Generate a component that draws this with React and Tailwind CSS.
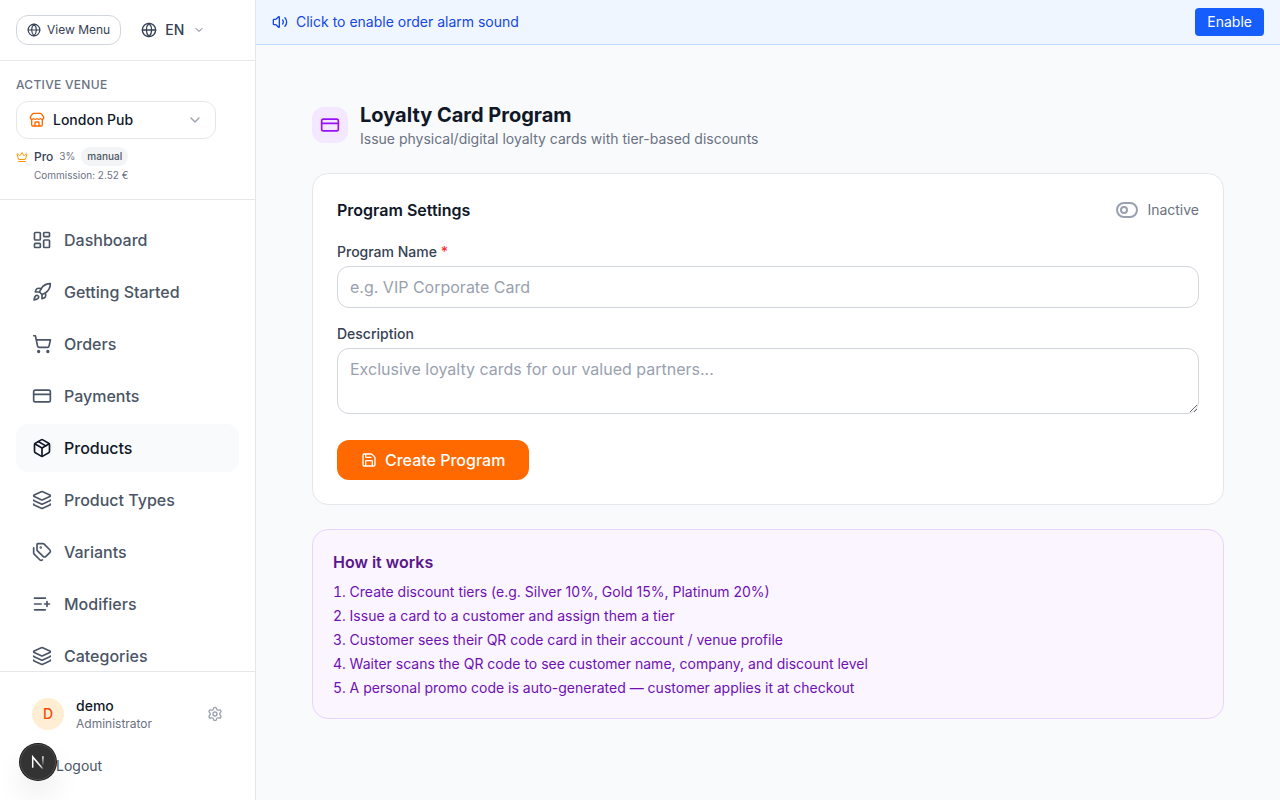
import { useState } from 'react';
import {
  ChevronDown,
  CreditCard,
  Crown,
  Globe,
  Layers,
  LayoutDashboard,
  ListPlus,
  LogOut,
  Package,
  Rocket,
  Save,
  Settings,
  ShoppingCart,
  Store,
  Tags,
  ToggleLeft,
  ToggleRight,
  Volume2,
} from 'lucide-react';

const navItems = [
  { label: 'Dashboard', icon: LayoutDashboard },
  { label: 'Getting Started', icon: Rocket },
  { label: 'Orders', icon: ShoppingCart },
  { label: 'Payments', icon: CreditCard },
  { label: 'Products', icon: Package, active: true },
  { label: 'Product Types', icon: Layers },
  { label: 'Variants', icon: Tags },
  { label: 'Modifiers', icon: ListPlus },
  { label: 'Categories', icon: Layers },
];

const steps = [
  'Create discount tiers (e.g. Silver 10%, Gold 15%, Platinum 20%)',
  'Issue a card to a customer and assign them a tier',
  'Customer sees their QR code card in their account / venue profile',
  'Waiter scans the QR code to see customer name, company, and discount level',
  'A personal promo code is auto-generated — customer applies it at checkout',
];

function Sidebar() {
  return (
    <aside className="sticky top-0 flex h-screen w-64 shrink-0 flex-col border-r border-gray-200 bg-white">
      <div className="flex h-[61px] shrink-0 items-center gap-2 border-b border-gray-200 px-4">
        <a
          href="#menu"
          className="flex items-center gap-1.5 rounded-xl border border-gray-300 px-2.5 py-1.5 text-xs text-gray-700"
        >
          <Globe className="size-3.5" />
          View Menu
        </a>
        <label className="flex items-center gap-2 px-3 py-2 text-sm font-medium text-gray-700">
          <Globe className="size-4" />
          <select aria-label="Language" className="appearance-none bg-transparent">
            <option>EN</option>
          </select>
          <ChevronDown className="size-3 text-gray-500" />
        </label>
      </div>

      <div className="shrink-0 border-b border-gray-200 p-4">
        <label
          htmlFor="venue"
          className="mb-2 block text-xs font-medium tracking-wide text-gray-500 uppercase"
        >
          Active venue
        </label>
        <div className="flex w-50 items-center gap-2 rounded-xl border border-gray-200 px-3 py-2 text-sm">
          <Store className="size-4 text-[#ff6900]" />
          <select
            id="venue"
            className="min-w-0 flex-1 appearance-none bg-transparent font-medium text-gray-900"
          >
            <option>London Pub</option>
          </select>
          <ChevronDown className="size-4 text-gray-400" />
        </div>
        <div className="mt-2 flex items-center gap-1.5">
          <Crown className="size-3 text-amber-500" />
          <span className="text-xs font-medium text-gray-700">Pro</span>
          <span className="text-[10px] leading-[15px] text-gray-500">3%</span>
          <span className="rounded-full bg-gray-100 px-1.5 py-0.5 text-[10px] leading-[15px] font-medium text-gray-600">
            manual
          </span>
        </div>
        <p className="mt-0.5 pl-[18px] text-[10px] leading-[15px] text-gray-500">
          Commission: 2.52 €
        </p>
      </div>

      <nav className="min-h-0 flex-1 overflow-y-auto p-4 [scrollbar-width:none]">
        <ul className="flex flex-col gap-1">
          {navItems.map(({ label, icon: Icon, active }) => (
            <li key={label}>
              <a
                href="#nav"
                aria-current={active ? 'page' : undefined}
                className={
                  active
                    ? 'flex items-center gap-3 rounded-xl bg-gray-50 px-4 py-3 font-medium text-gray-900'
                    : 'flex items-center gap-3 rounded-xl px-4 py-3 font-medium text-gray-600'
                }
              >
                <Icon className="size-5" />
                {label}
              </a>
            </li>
          ))}
        </ul>
      </nav>

      <div className="flex shrink-0 flex-col gap-2 border-t border-gray-200 p-4">
        <div className="flex items-center gap-3 px-4 py-2">
          <div className="flex size-8 items-center justify-center rounded-full bg-orange-100 text-sm font-medium text-orange-600">
            D
          </div>
          <div className="min-w-0 flex-1">
            <p className="text-sm font-medium text-gray-900">demo</p>
            <p className="text-xs text-gray-500">Administrator</p>
          </div>
          <button type="button" aria-label="Account settings" className="text-gray-400">
            <Settings className="size-4" />
          </button>
        </div>
        <button type="button" className="flex items-center gap-2 px-4 py-2 text-sm text-gray-600">
          <LogOut className="size-4" />
          Logout
        </button>
      </div>
    </aside>
  );
}

function DevBadge() {
  return (
    <button
      type="button"
      aria-label="Open developer tools"
      className="fixed bottom-5 left-5 flex size-9 items-center justify-center rounded-full bg-[#333333] shadow-[0_0_0_1px_#171717,inset_0_0_0_1px_#4a4a4a,0_16px_32px_-8px_rgba(0,0,0,0.24)]"
    >
      <svg width="36" height="36" viewBox="0 0 36 36" fill="none" aria-hidden="true">
        <defs>
          <linearGradient id="diagonal" x1="18" y1="18" x2="24" y2="25" gradientUnits="userSpaceOnUse">
            <stop stopColor="white" />
            <stop offset="0.6" stopColor="white" stopOpacity="0.8" />
            <stop offset="1" stopColor="white" stopOpacity="0" />
          </linearGradient>
          <linearGradient id="stem" x1="23" y1="12" x2="23" y2="22" gradientUnits="userSpaceOnUse">
            <stop stopColor="white" />
            <stop offset="1" stopColor="white" stopOpacity="0" />
          </linearGradient>
        </defs>
        <path d="M12.7 23.8V12.9L23 25" stroke="url(#diagonal)" strokeWidth="1.5" />
        <path d="M22.9 12.2V21.5" stroke="url(#stem)" strokeWidth="1.5" />
      </svg>
    </button>
  );
}

function ProgramSettings() {
  const [active, setActive] = useState(false);
  const Toggle = active ? ToggleRight : ToggleLeft;
  return (
    <form
      onSubmit={(event) => event.preventDefault()}
      className="flex flex-col gap-5 rounded-2xl border border-gray-200 bg-white p-6"
    >
      <div className="flex items-center justify-between">
        <h2 className="font-semibold text-gray-900">Program Settings</h2>
        <button
          type="button"
          role="switch"
          aria-checked={active}
          onClick={() => setActive(!active)}
          className="flex items-center gap-2 text-sm text-gray-500"
        >
          <Toggle className="size-6 text-gray-400" />
          {active ? 'Active' : 'Inactive'}
        </button>
      </div>
      <div className="flex flex-col gap-4 pb-1.5">
        <div className="flex flex-col gap-1">
          <label htmlFor="program-name" className="text-sm font-medium text-gray-700">
            Program Name <span className="text-red-500">*</span>
          </label>
          <input
            id="program-name"
            type="text"
            placeholder="e.g. VIP Corporate Card"
            className="w-full rounded-xl border border-gray-300 px-3 py-2 placeholder:text-gray-400"
          />
        </div>
        <div className="flex flex-col gap-1">
          <label htmlFor="description" className="text-sm font-medium text-gray-700">
            Description
          </label>
          <textarea
            id="description"
            rows={2}
            placeholder="Exclusive loyalty cards for our valued partners..."
            className="w-full rounded-xl border border-gray-300 px-3 py-2 placeholder:text-gray-400"
          />
        </div>
      </div>
      <button
        type="submit"
        className="flex items-center gap-2 self-start rounded-xl bg-[#ff6900] px-6 py-2 font-medium text-white"
      >
        <Save className="size-4" />
        Create Program
      </button>
    </form>
  );
}

export default function App() {
  return (
    <div className="flex min-h-screen bg-gray-50 font-[Inter,sans-serif] text-gray-900">
      <Sidebar />
      <div className="min-w-0 flex-1">
        <div className="flex items-center justify-between border-b border-blue-200 bg-blue-50 px-4 py-2 text-sm">
          <div className="flex items-center gap-2 text-blue-700">
            <Volume2 className="size-4" />
            <span>Click to enable order alarm sound</span>
          </div>
          <button type="button" className="rounded bg-blue-600 px-3 py-1 text-white">
            Enable
          </button>
        </div>
        <main className="flex flex-col gap-6 p-14">
          <header className="flex items-center gap-3">
            <div className="rounded-xl bg-purple-100 p-2 text-purple-600">
              <CreditCard className="size-5" />
            </div>
            <div>
              <h1 className="text-xl font-bold text-gray-900">Loyalty Card Program</h1>
              <p className="text-sm text-gray-500">
                Issue physical/digital loyalty cards with tier-based discounts
              </p>
            </div>
          </header>
          <ProgramSettings />
          <section className="rounded-2xl border border-purple-200 bg-purple-50 p-5">
            <h2 className="mb-2 font-semibold text-purple-900">How it works</h2>
            <ol className="flex list-inside list-decimal flex-col gap-1 text-sm text-purple-800">
              {steps.map((step) => (
                <li key={step}>{step}</li>
              ))}
            </ol>
          </section>
        </main>
      </div>
      <DevBadge />
    </div>
  );
}
